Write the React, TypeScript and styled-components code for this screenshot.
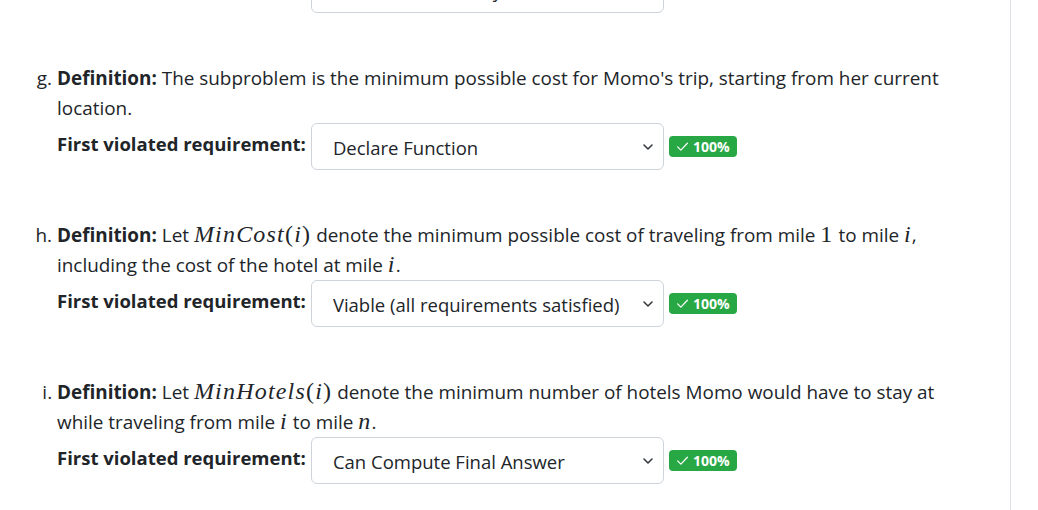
import React from "react";
import styled, { createGlobalStyle } from "styled-components";

const Global = createGlobalStyle`
  html, body { margin: 0; padding: 0; background: #fff; }
  body {
    font-family: "Open Sans", "Noto Sans", sans-serif;
    font-size: 18.9px;
    line-height: 30px;
    color: #212529;
    overflow: hidden;
  }
`;

const Page = styled.div`
  display: flex;
  width: 1038px;
  height: 510px;
  overflow: hidden;
`;

const Main = styled.div`
  width: 1011px;
  border-right: 1px solid #dee2e6;
  box-sizing: border-box;
  height: 510px;
  overflow: hidden;
`;

const List = styled.ol`
  margin: -34px 0 0 0;
  padding: 0 0 0 57px;
  width: 900px;
  list-style-type: lower-alpha;
`;

const Item = styled.li`
  margin-bottom: 50px;
`;

const Math = styled.span`
  font-family: "Liberation Serif", "DejaVu Serif", serif;
  font-style: italic;
  font-size: 1.27em;
  letter-spacing: 0.05em;
  line-height: 0;
`;

const Upright = styled.span`
  font-style: normal;
`;

const Row = styled.div`
  display: flex;
  align-items: center;
  gap: 5px;
  height: 47px;
`;

const Label = styled.strong`
  font-weight: 700;
  font-size: 18.5px;
  padding-bottom: 5px;
`;

const SelectWrap = styled.div`
  position: relative;
  width: 353px;
  height: 47px;
`;

const Select = styled.select`
  appearance: none;
  -webkit-appearance: none;
  width: 100%;
  height: 100%;
  box-sizing: border-box;
  border: 1px solid #ced4da;
  border-radius: 6px;
  background: #fff;
  padding: 2px 36px 0 21px;
  font-family: inherit;
  font-size: 18.5px;
  color: #212529;
`;

const Chevron = styled.svg`
  position: absolute;
  right: 6px;
  top: 50%;
  transform: translateY(-50%);
  pointer-events: none;
`;

const Badge = styled.span`
  display: inline-flex;
  align-items: center;
  gap: 4px;
  background: #28a745;
  color: #fff;
  font-weight: 700;
  font-size: 14px;
  line-height: 1;
  padding: 0 7px 0 7px;
  border-radius: 4px;
  height: 21px;
  box-sizing: border-box;
`;

const Check = () => (
  <svg width="13" height="13" viewBox="0 0 16 16" fill="none" stroke="#fff" strokeWidth="1.5" strokeLinecap="round" strokeLinejoin="round">
    <path d="M2 8.5 L6 12.5 L14 4" />
  </svg>
);

const Requirement = ({ value, showBadge = true }: { value: string; showBadge?: boolean }) => (
  <Row>
    <Label>First violated requirement:</Label>
    <SelectWrap>
      <Select defaultValue={value}>
        <option>{value}</option>
      </Select>
      <Chevron width="20" height="20" viewBox="0 0 20 20" fill="none" stroke="#343a40" strokeWidth="1.6" strokeLinecap="round" strokeLinejoin="round">
        <path d="M6 8l4 4 4-4" />
      </Chevron>
    </SelectWrap>
    {showBadge && (
      <Badge>
        <Check />
        100%
      </Badge>
    )}
  </Row>
);

export default function App() {
  return (
    <>
      <Global />
      <Page>
        <Main>
          <List start={6}>
            <Item>
              <Requirement value="Defined Recursively" showBadge={false} />
            </Item>
            <Item>
              <strong>Definition:</strong> The subproblem is the minimum possible cost for Momo's trip, starting from her current location.
              <Requirement value="Declare Function" />
            </Item>
            <Item>
              <strong>Definition:</strong> Let <Math>MinCost<Upright>(</Upright>i<Upright>)</Upright></Math> denote the minimum possible cost of traveling from mile <Math><Upright>1</Upright></Math> to mile <Math>i</Math>, including the cost of the hotel at mile <Math>i</Math>.
              <Requirement value="Viable (all requirements satisfied)" />
            </Item>
            <Item>
              <strong>Definition:</strong> Let <Math>MinHotels<Upright>(</Upright>i<Upright>)</Upright></Math> denote the minimum number of hotels Momo would have to stay at while traveling from mile <Math>i</Math> to mile <Math>n</Math>.
              <Requirement value="Can Compute Final Answer" />
            </Item>
          </List>
        </Main>
      </Page>
    </>
  );
}
